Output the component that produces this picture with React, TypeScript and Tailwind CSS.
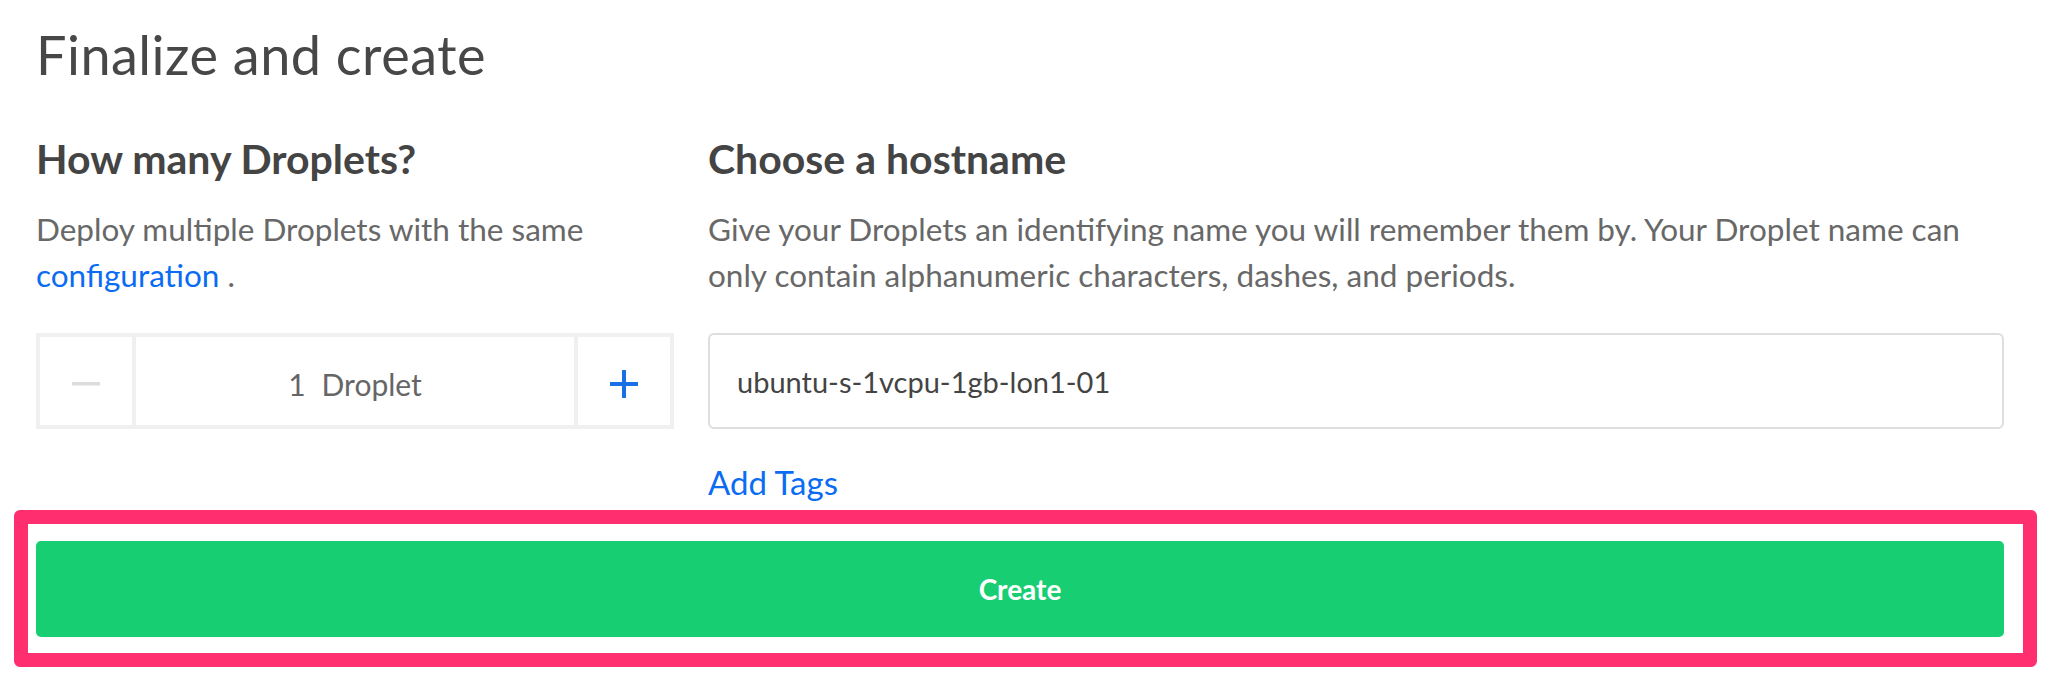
import React from "react";

export default function App() {
  return (
    <div className="w-[2056px] h-[690px] bg-white overflow-hidden font-['Lato',_'Noto_Sans',_sans-serif]">
      <div className="pl-[36px] pr-[52px] pt-[28px]">
        <h1 className="text-[54px] leading-[54px] font-normal text-[#474747] tracking-[0.5px]">
          Finalize and create
        </h1>
        <div className="flex gap-[34px] mt-[56px]">
          <div className="w-[638px] shrink-0">
            <h2 className="text-[41px] leading-[41px] font-bold text-[#444444]">How many Droplets?</h2>
            <p className="mt-[27px] text-[31.5px] leading-[46px] text-[#686868]">
              Deploy multiple Droplets with the same{" "}
              <a className="text-[#0a6cf2]">configuration</a> .
            </p>
            <div className="mt-[35px] flex h-[96px] border-4 border-[#f0f0f0]">
              <div className="w-[92px] flex items-center justify-center pt-[6px]">
                <svg width="28" height="4" viewBox="0 0 28 4">
                  <rect x="0" y="0" width="28" height="3.5" fill="#dcdcdc" />
                </svg>
              </div>
              <div className="flex-1 border-x-4 border-[#f0f0f0] flex items-center justify-center pt-[6px] text-[30px] text-[#666666]">
                <span>1</span>
                <span className="ml-[16px]">Droplet</span>
              </div>
              <div className="w-[92px] flex items-center justify-center pt-[6px]">
                <svg width="28" height="28" viewBox="0 0 28 28">
                  <rect x="12" y="0" width="4" height="28" fill="#1b6fe6" />
                  <rect x="0" y="12" width="28" height="4" fill="#1b6fe6" />
                </svg>
              </div>
            </div>
          </div>
          <div className="flex-1">
            <h2 className="text-[41px] leading-[41px] font-bold text-[#444444]">Choose a hostname</h2>
            <p className="mt-[27px] text-[31.5px] leading-[46px] text-[#686868]">
              Give your Droplets an identifying name you will remember them by. Your Droplet name can only contain
              alphanumeric characters, dashes, and periods.
            </p>
            <div className="mt-[35px] h-[96px] border-2 border-[#dedede] rounded-[6px] flex items-center pl-[27px] pt-[2px] text-[29px] text-[#444444]">
              ubuntu-s-1vcpu-1gb-lon1-01
            </div>
            <div className="mt-[30px] text-[33px] leading-[46px] text-[#0a6cf2]">Add Tags</div>
          </div>
        </div>
      </div>
      <div className="mt-[5px] ml-[14px] mr-[19px] border-[14px] border-[#ff2e6e] rounded-[6px] pt-[17px] pb-[16px] pl-[8px] pr-[19px]">
        <div className="h-[96px] rounded-[5px] bg-[#18ce73] flex items-center justify-center text-[28px] font-bold text-white">
          Create
        </div>
      </div>
    </div>
  );
}
